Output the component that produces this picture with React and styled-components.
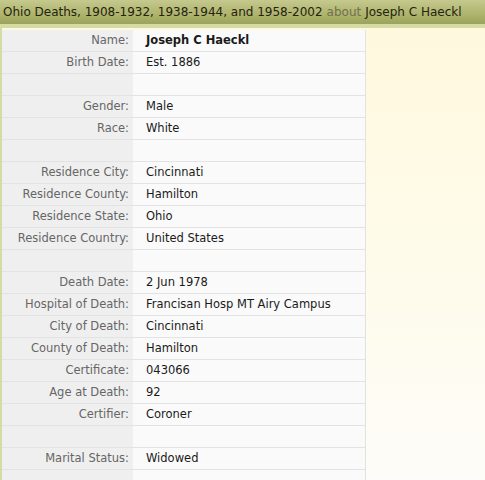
import React from 'react'
import styled, { createGlobalStyle } from 'styled-components'

const GlobalStyle = createGlobalStyle`
  html, body {
    margin: 0;
    padding: 0;
  }

  body {
    background: linear-gradient(to bottom, #fff8dc 0px, #fffbea 250px, #fdfcf8 480px);
    min-height: 480px;
    font-family: "DejaVu Sans", Verdana, sans-serif;
  }
`

const Page = styled.div`
  width: 485px;
  height: 480px;
  overflow: hidden;
`

const Header = styled.div`
  height: 24px;
  padding-left: 3px;
  display: flex;
  align-items: center;
  background: linear-gradient(to bottom, #c5c98e 0%, #b0b56f 55%, #9ea35b 100%);
  border-bottom: 4px solid #d4dba6;
  font-size: 12px;
  color: #23230f;
  white-space: nowrap;
`

const About = styled.span`
  color: #707052;
  margin: 0 4px;
`

const Body = styled.div`
  padding-left: 2px;
  background: linear-gradient(to right, #d4dba6 0px, #d4dba6 2px, transparent 2px);
  padding-top: 2px;
`

const Table = styled.div`
  width: 363px;
  border-right: 1px solid #e2e2e2;
`

const Row = styled.div`
  display: grid;
  grid-template-columns: 131px 1fr;
  height: 21px;
  border-bottom: 1px solid #e3e3e3;
  font-size: 11.5px;
`

const Label = styled.div`
  background: #efefef;
  color: #666;
  text-align: right;
  padding-right: 4px;
  line-height: 21px;
  white-space: nowrap;
`

const Value = styled.div`
  background: #fafafa;
  color: #1a1a1a;
  padding-left: 13px;
  line-height: 21px;
  white-space: nowrap;
  font-weight: ${(p) => (p.$bold ? 'bold' : 'normal')};
`

const rows = [
  ['Name:', 'Joseph C Haeckl', true],
  ['Birth Date:', 'Est. 1886'],
  ['', ''],
  ['Gender:', 'Male'],
  ['Race:', 'White'],
  ['', ''],
  ['Residence City:', 'Cincinnati'],
  ['Residence County:', 'Hamilton'],
  ['Residence State:', 'Ohio'],
  ['Residence Country:', 'United States'],
  ['', ''],
  ['Death Date:', '2 Jun 1978'],
  ['Hospital of Death:', 'Francisan Hosp MT Airy Campus'],
  ['City of Death:', 'Cincinnati'],
  ['County of Death:', 'Hamilton'],
  ['Certificate:', '043066'],
  ['Age at Death:', '92'],
  ['Certifier:', 'Coroner'],
  ['', ''],
  ['Marital Status:', 'Widowed'],
  ['', ''],
]

export default function App() {
  return (
    <Page>
      <GlobalStyle />
      <Header>
        Ohio Deaths, 1908-1932, 1938-1944, and 1958-2002
        <About>about</About>
        Joseph C Haeckl
      </Header>
      <Body>
        <Table>
          {rows.map(([label, value, bold], i) => (
            <Row key={i}>
              <Label>{label}</Label>
              <Value $bold={bold}>{value}</Value>
            </Row>
          ))}
        </Table>
      </Body>
    </Page>
  )
}
